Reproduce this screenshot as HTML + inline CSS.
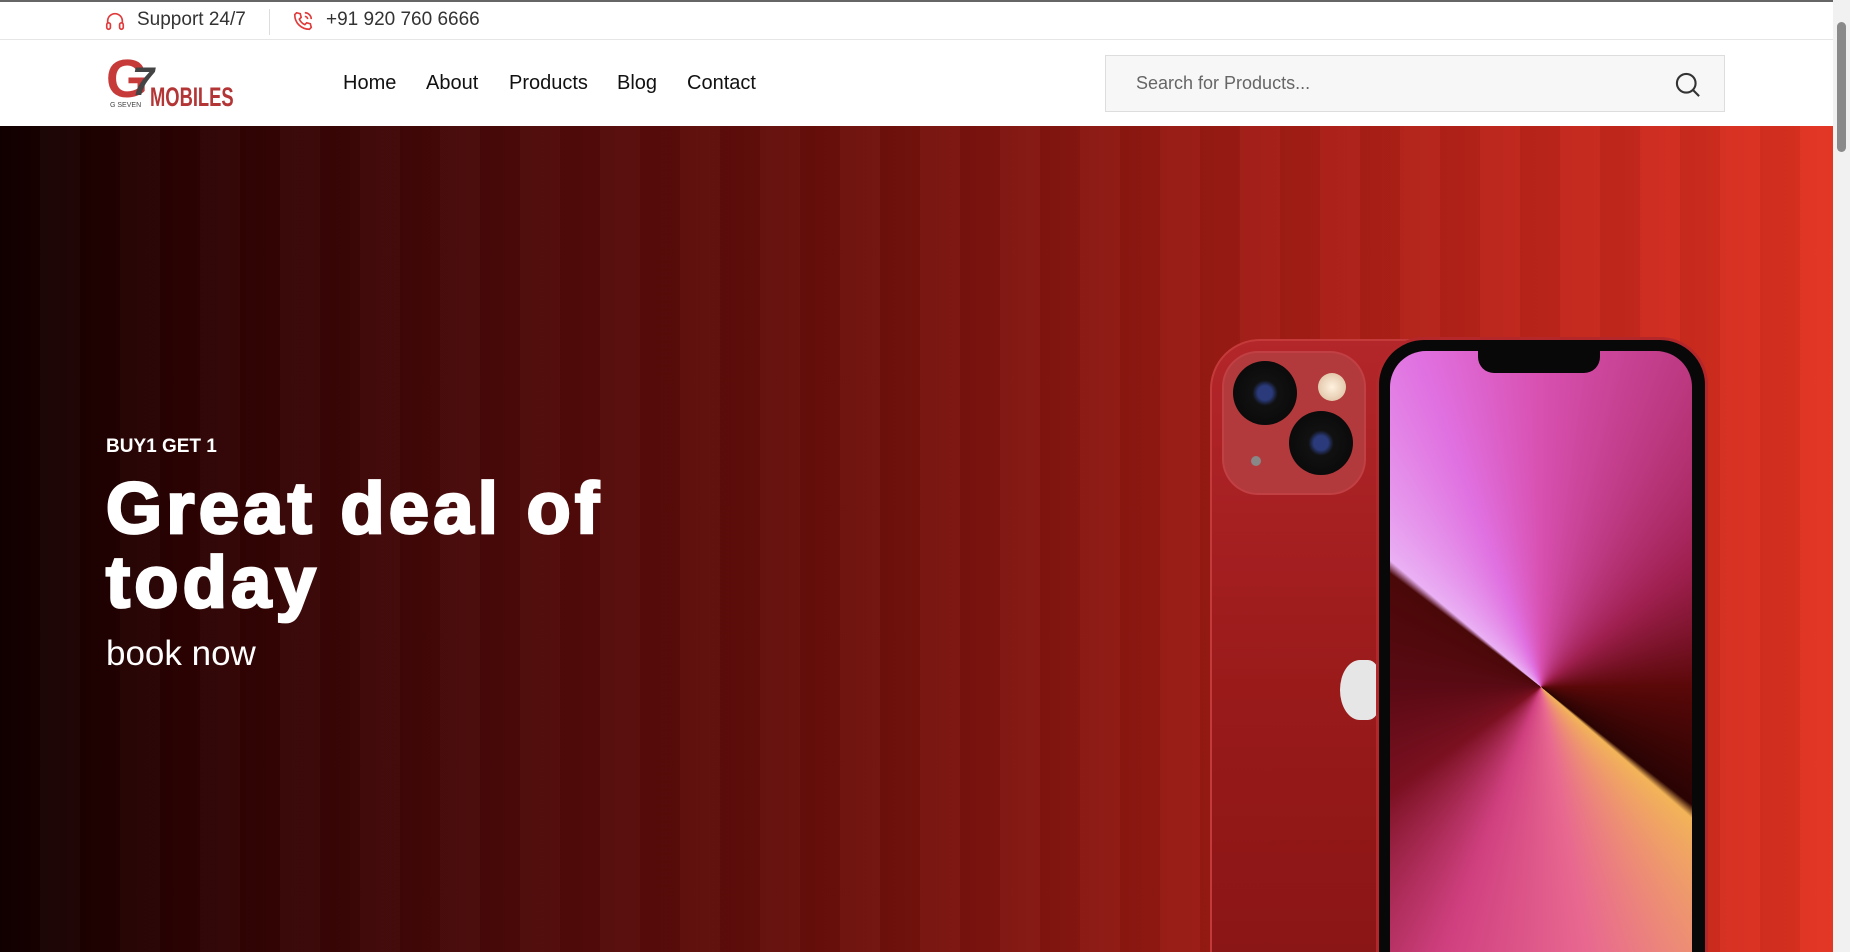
<!DOCTYPE html>
<html><head><meta charset="utf-8"><style>
*{margin:0;padding:0;box-sizing:border-box}
html,body{width:1850px;height:952px;overflow:hidden;background:#fff;font-family:"Liberation Sans",Arial,sans-serif}
.top{position:absolute;left:0;top:0;width:1833px;height:40px;border-top:2px solid #666;border-bottom:1px solid #e6e6e6}
.top span{position:absolute;top:7px;font-size:19px;color:#333}
.nav{position:absolute;left:0;top:40px;width:1833px;height:86px;background:#fff}
.menu a{position:absolute;top:32px;font-size:20px;color:#111;text-decoration:none}
.search{position:absolute;left:1105px;top:55px;width:620px;height:57px;background:#f7f7f7;border:1px solid #ddd}
.search span{position:absolute;left:30px;top:17px;font-size:18px;color:#666}
.hero{position:absolute;left:0;top:126px;width:1833px;height:826px;overflow:hidden;
background:linear-gradient(90deg,#120000 0%,#2c0202 10%,#470808 25%,#640e0a 42%,#881610 58%,#a91e16 72%,#c8281c 88%,#e33322 100%)}
.stripes{position:absolute;inset:0;background:repeating-linear-gradient(90deg,rgba(0,0,0,.05) 0 40px,rgba(255,255,255,.02) 40px 80px)}
.h6{position:absolute;left:106px;top:310px;color:#fff;font-weight:bold;font-size:19px}
.h1{position:absolute;left:106px;top:346px;color:#fff;font-weight:900;font-size:72px;line-height:74px;letter-spacing:4.4px;-webkit-text-stroke:2.8px #fff}
.bk{position:absolute;left:106px;top:508px;color:#fff;font-size:35px}
.scroll{position:absolute;right:0;top:0;width:17px;height:952px;background:#f1f1f1}
.scroll i{position:absolute;left:4px;top:22px;width:9px;height:130px;background:#8a8a8a;border-radius:5px}
</style></head><body>
<div class="top">
<svg style="position:absolute;left:104px;top:8px" width="22" height="22" viewBox="0 0 24 24" fill="none" stroke="#e03a3a" stroke-width="1.8"><path d="M4 15v-3a8 8 0 0 1 16 0v3"/><rect x="3" y="14" width="4" height="7" rx="2"/><rect x="17" y="14" width="4" height="7" rx="2"/></svg>
<span style="left:137px">Support 24/7</span>
<div style="position:absolute;left:269px;top:7px;width:1px;height:26px;background:#ddd"></div>
<svg style="position:absolute;left:292px;top:8px" width="22" height="22" viewBox="0 0 24 24" fill="none" stroke="#e03a3a" stroke-width="1.8"><path d="M5 3l4 1 1 4-2 2a12 12 0 0 0 6 6l2-2 4 1 1 4-2 2C10 21 3 14 3 5z"/><path d="M14 3a7 7 0 0 1 7 7M14 7a3 3 0 0 1 3 3"/></svg>
<span style="left:326px">+91 920 760 6666</span>
</div>
<div class="nav">
<div style="position:absolute;left:106px;top:12px;width:130px;height:60px">
<div style="position:absolute;left:0;top:0;font-size:54px;font-weight:bold;color:#c73a3a;line-height:54px">G</div>
<div style="position:absolute;left:26px;top:10px;font-size:40px;font-weight:bold;color:#444;line-height:40px;font-style:italic">7</div>
<div style="position:absolute;left:44px;top:30px;font-size:27px;font-weight:bold;color:#b33535;transform:scaleX(.68);transform-origin:left">MOBILES</div>
<div style="position:absolute;left:4px;top:50px;font-size:7px;color:#444">G SEVEN</div>
</div>
<div class="menu"><a style="left:343px">Home</a><a style="left:426px">About</a><a style="left:509px">Products</a><a style="left:617px">Blog</a><a style="left:687px">Contact</a></div>
</div>
<div class="search"><span>Search for Products...</span>
<svg style="position:absolute;left:568px;top:15px" width="28" height="28" viewBox="0 0 24 24" fill="none" stroke="#333" stroke-width="1.8"><circle cx="10.5" cy="10.5" r="8"/><path d="M16.5 16.5l5 5"/></svg></div>
<div class="hero"><div class="stripes"></div>
<div class="h6">BUY1 GET 1</div>
<div class="h1">Great deal of<br>today</div>
<div class="bk">book now</div>
<div style="position:absolute;left:1210px;top:213px;width:310px;height:700px;border-radius:50px;background:linear-gradient(180deg,#b3262a,#9a1a1a 50%,#861414);border:2px solid #c43a3a"></div>
<div style="position:absolute;left:1224px;top:227px;width:140px;height:140px;border-radius:34px;background:#b2393c;box-shadow:0 0 0 2px #c04044"></div>
<div style="position:absolute;left:1233px;top:235px;width:64px;height:64px;border-radius:50%;background:radial-gradient(circle,#2a3a7a 0 16%,#111 28%,#0a0a0a 76%,#c02a2a 80%,#8a1a1a 100%)"></div>
<div style="position:absolute;left:1289px;top:285px;width:64px;height:64px;border-radius:50%;background:radial-gradient(circle,#2a3a7a 0 16%,#111 28%,#0a0a0a 76%,#c02a2a 80%,#8a1a1a 100%)"></div>
<div style="position:absolute;left:1318px;top:247px;width:28px;height:28px;border-radius:50%;background:radial-gradient(circle,#fff2e0,#d8b898)"></div>
<div style="position:absolute;left:1251px;top:330px;width:10px;height:10px;border-radius:50%;background:#888"></div>
<div style="position:absolute;left:1340px;top:534px;width:40px;height:60px;border-radius:50% 30% 30% 50%;background:#e6e6e6"></div>
<div style="position:absolute;left:1376px;top:211px;width:332px;height:720px;border-radius:48px;background:#080808;border:3px solid #b3262a"></div>
<div style="position:absolute;left:1390px;top:225px;width:302px;height:700px;border-radius:36px;overflow:hidden;background:conic-gradient(from 0deg at 50% 48%,#d850b0 0deg,#a02050 50deg,#5a0808 90deg,#2a0303 128deg,#f2b458 131deg,#e86890 170deg,#d04080 200deg,#7a1020 235deg,#5a0a14 270deg,#4a0808 307deg,#eab0f4 310deg,#e070e0 340deg,#d850b0 360deg)">
<div style="position:absolute;left:88px;top:0;width:122px;height:22px;background:#080808;border-radius:0 0 16px 16px"></div>
</div>
</div>
<div class="scroll"><i></i></div>
</body></html>
